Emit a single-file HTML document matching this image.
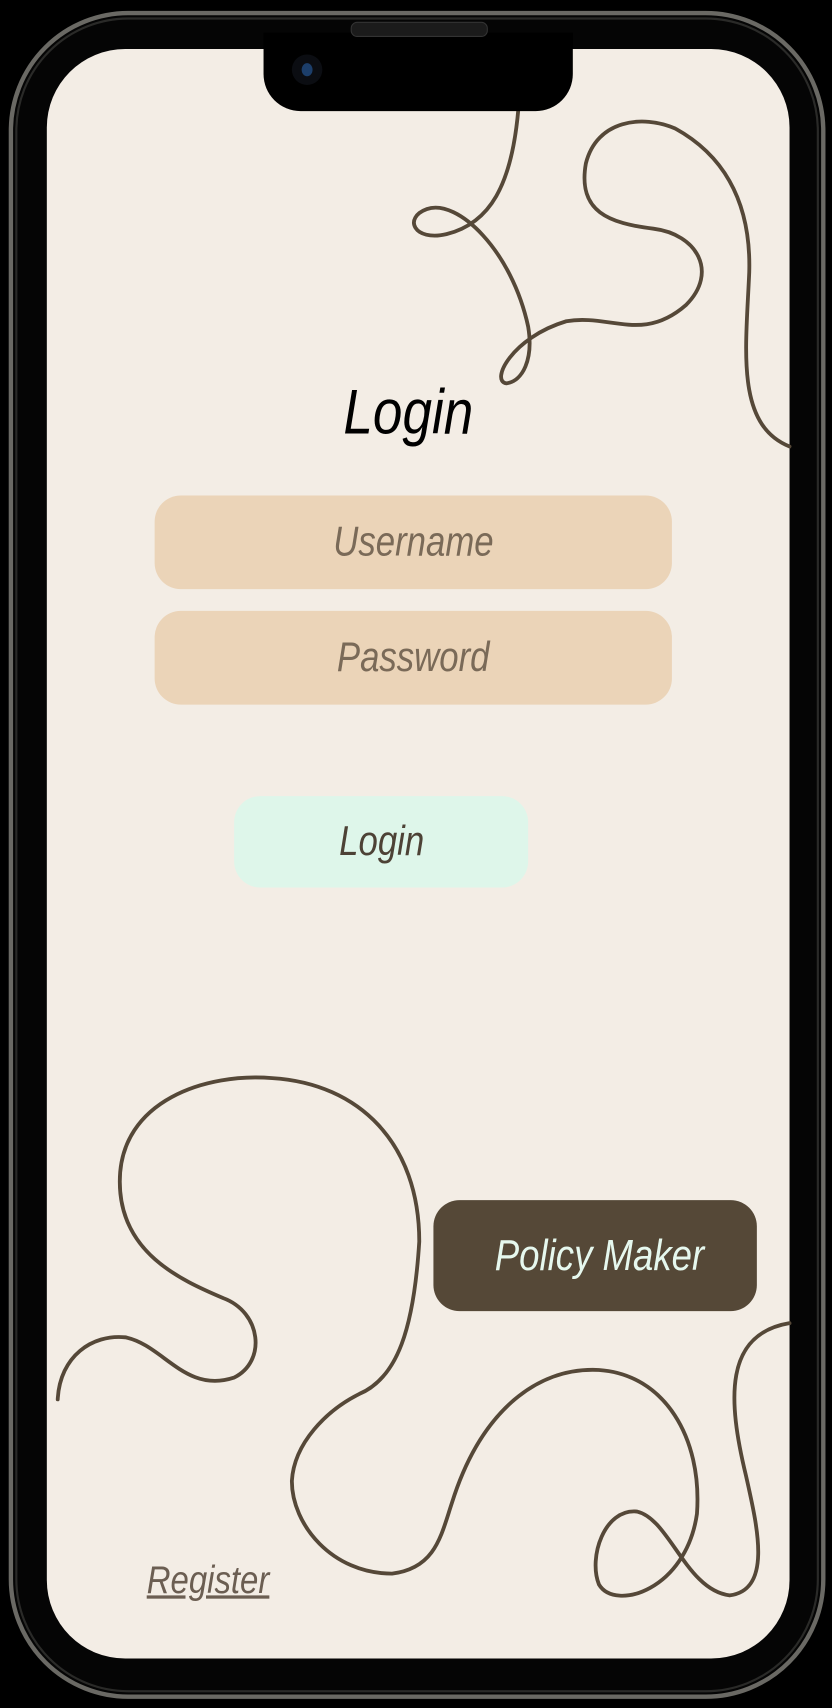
<!DOCTYPE html>
<html><head><meta charset="utf-8"><style>
html,body{margin:0;padding:0;background:#000;width:832px;height:1707px;overflow:hidden}
#w{position:absolute;left:0;top:0;width:764px;height:1568px;transform:scale(1.08901);transform-origin:0 0}
.frame{position:absolute;left:8px;top:10px;width:750px;height:1550px;border-radius:110px;border:4px solid #6a6964;box-sizing:border-box;background:#050505}
.frame2{position:absolute;left:14px;top:16px;width:738px;height:1538px;border-radius:104px;border:2px solid #2a2a28;box-sizing:border-box}
.screen{position:absolute;left:43px;top:45px;width:682px;height:1478px;border-radius:72px;background:#f3ede5;overflow:hidden}
.notch{position:absolute;left:242px;top:30px;width:284px;height:72px;background:#000;border-radius:0 0 34px 34px}
.spk{position:absolute;left:322px;top:20px;width:124px;height:12px;border-radius:6px;background:#1b1b1b;border:1px solid #333}
.cam{position:absolute;left:268px;top:50px;width:28px;height:28px;border-radius:50%;background:#0b0d12}
.cam:after{content:"";position:absolute;left:9px;top:8px;width:10px;height:12px;border-radius:50%;background:#1c3e6a}
.t{position:absolute;font-family:"Liberation Sans",sans-serif;font-style:italic;text-align:center}
.t span{display:inline-block;transform:scaleX(0.84)}
.field{position:absolute;left:142px;width:475px;height:86px;border-radius:24px;background:#ebd4b8;color:#7a6a58;font-size:38px;text-align:center;line-height:86px;font-family:"Liberation Sans",sans-serif;font-style:italic}
.field span{display:inline-block;transform:scaleX(0.84)}
</style></head><body><div id="w">
<div class="frame"></div><div class="frame2"></div>
<div class="screen"></div>
<svg style="position:absolute;left:0;top:0" width="764" height="1568" fill="none" stroke="#554838" stroke-width="3.5" stroke-linecap="round">
<path d="M476 100 C470 170 450 205 410 215 C380 222 370 200 392 192 C420 182 470 230 485 300 C490 330 480 350 465 352 C450 350 470 310 520 295 C560 288 590 315 630 280 C660 250 640 215 600 210 C560 205 530 195 538 150 C548 110 590 105 620 118 C660 140 690 180 688 250 C685 320 675 390 725 410"/>
<path d="M53 1285 C55 1245 85 1225 115 1228 C150 1235 170 1280 215 1265 C245 1250 240 1205 205 1192 C165 1175 110 1150 110 1085 C110 1010 190 985 250 990 C330 995 385 1050 385 1140 C380 1220 365 1265 330 1280 C300 1295 270 1325 268 1360 C268 1400 305 1445 360 1445 C400 1440 405 1410 415 1380 C440 1300 490 1255 550 1258 C610 1262 645 1320 640 1390 C630 1460 565 1480 550 1455 C540 1430 555 1385 585 1388 C615 1395 630 1460 670 1465 C710 1460 695 1400 685 1355 C668 1285 665 1225 725 1215"/>
</svg>
<div class="notch"></div><div class="spk"></div><div class="cam"></div>
<div class="t" style="left:240px;top:345px;width:270px;font-size:58px;color:#000"><span>Login</span></div>
<div class="field" style="top:455px"><span>Username</span></div>
<div class="field" style="top:561px"><span>Password</span></div>
<div style="position:absolute;left:215px;top:731px;width:270px;height:84px;border-radius:24px;background:#def6ea"></div>
<div class="t" style="left:215px;top:731px;width:270px;line-height:84px;font-size:38px;color:#4d4236"><span>Login</span></div>
<div style="position:absolute;left:398px;top:1102px;width:297px;height:102px;border-radius:24px;background:#554837"></div>
<div class="t" style="left:398px;top:1102px;width:305px;line-height:102px;font-size:40px;color:#e6f8ee"><span>Policy Maker</span></div>
<div class="t" style="left:120px;top:1430px;width:142px;font-size:36px;color:#6b5e52"><span style="text-decoration:underline">Register</span></div>
</div></body></html>
